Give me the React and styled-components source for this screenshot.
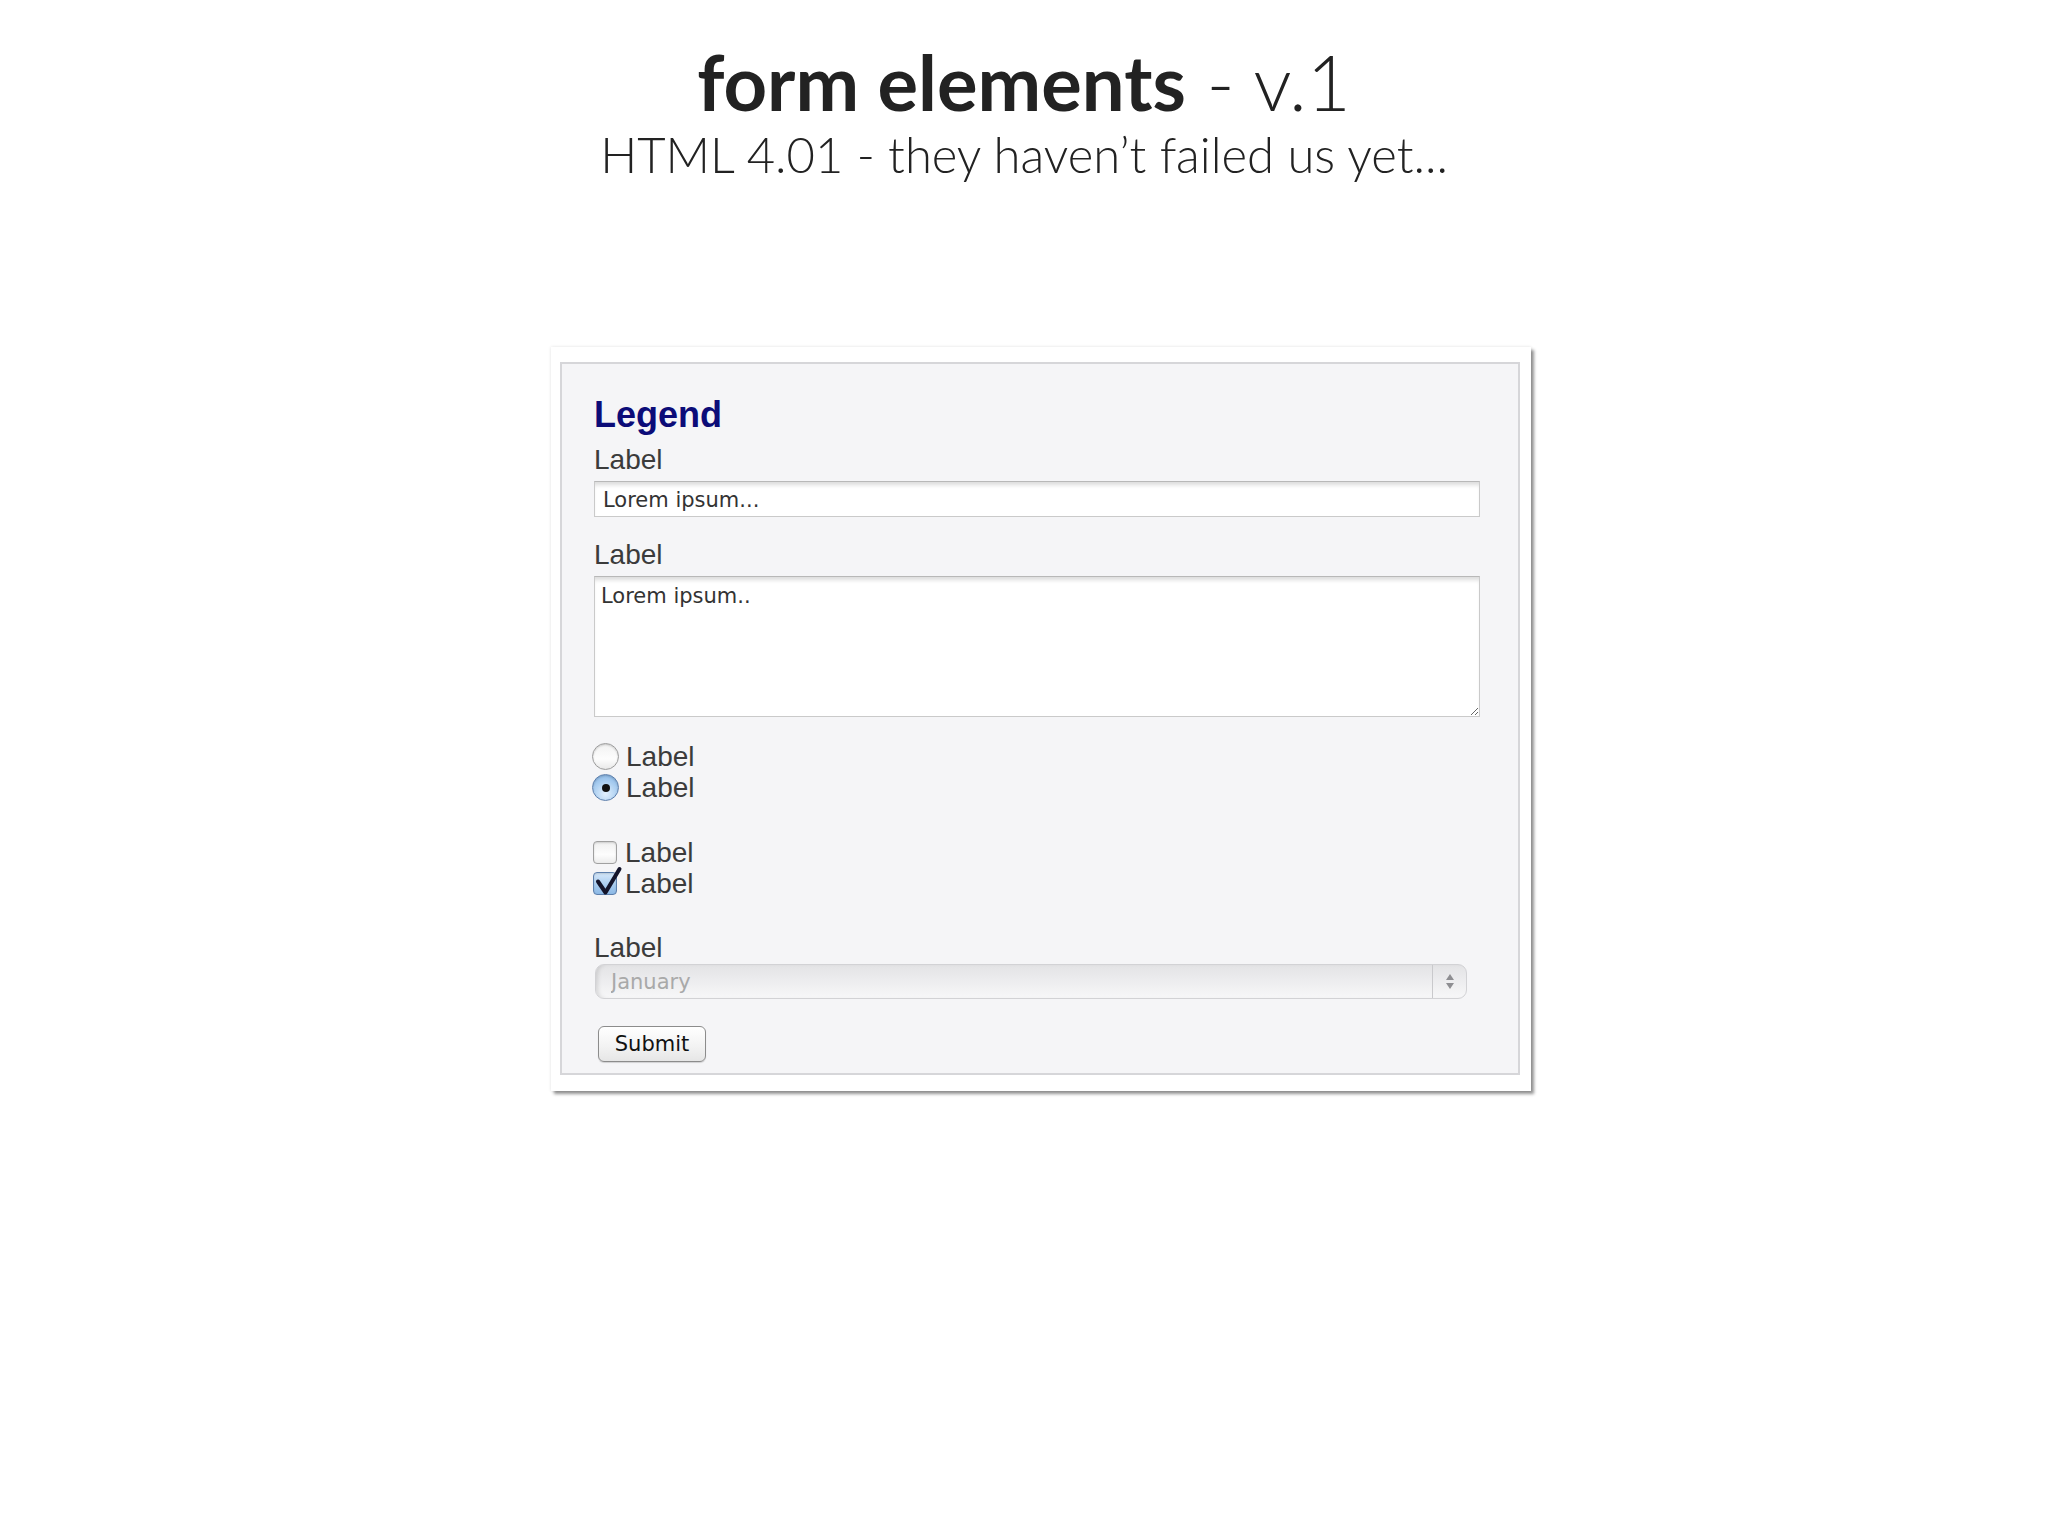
import React from "react";
import styled, { createGlobalStyle } from "styled-components";

const GlobalStyle = createGlobalStyle`
  body {
    margin: 0;
    background: #fff;
  }
`;

export default function App() {
  return (
    <Page>
      <GlobalStyle />
      <Header>
        <Title>
          form elements<Light> - v.1</Light>
        </Title>
        <Subtitle>HTML 4.01 - they haven’t failed us yet...</Subtitle>
      </Header>

      <Card>
        <Fieldset>
          <Legend>Legend</Legend>
          <Label>Label</Label>
          <TextInput readOnly value="Lorem ipsum..." />

          <Label $top={23}>Label</Label>
          <TextArea readOnly value="Lorem ipsum.." />

          <OptionGroup $top={24}>
            <OptionRow>
              <Radio />
              Label
            </OptionRow>
            <OptionRow>
              <Radio $checked />
              Label
            </OptionRow>
          </OptionGroup>

          <OptionGroup $top={34}>
            <OptionRow>
              <Checkbox />
              Label
            </OptionRow>
            <OptionRow>
              <Checkbox $checked>
                <CheckMark viewBox="0 0 24 23">
                  <path d="M4 8.5 L11.5 19.5 L25.5 -4" />
                </CheckMark>
              </Checkbox>
              Label
            </OptionRow>
          </OptionGroup>

          <Label $top={34}>Label</Label>
          <SelectWrap>
            <SelectField defaultValue="January" disabled>
              <option>January</option>
              <option>February</option>
            </SelectField>
            <ArrowCap>
              <ArrowUp />
              <ArrowDown />
            </ArrowCap>
          </SelectWrap>

          <SubmitButton>Submit</SubmitButton>
        </Fieldset>
      </Card>
    </Page>
  );
}

const Page = styled.div`
  width: 2048px;
  min-height: 1536px;
`;

const Header = styled.header`
  padding-top: 44px;
  text-align: center;
  color: #222;
  font-family: Lato, "Open Sans", sans-serif;
`;

const Title = styled.h1`
  margin: 0;
  font-size: 76px;
  line-height: 76px;
  font-weight: 700;
`;

const Light = styled.span`
  font-weight: 300;
`;

const Subtitle = styled.p`
  margin: 10px 0 0;
  font-size: 49px;
  line-height: 49px;
  font-weight: 300;
`;

const Card = styled.div`
  margin: 168px 0 0 551px;
  width: 980px;
  height: 744px;
  box-sizing: border-box;
  padding: 15px 11px 16px 9px;
  display: flex;
  background: #fff;
  box-shadow: 3px 3px 3px rgba(0, 0, 0, 0.42), 0 0 3px rgba(0, 0, 0, 0.12);
`;

const Fieldset = styled.div`
  flex: 1;
  display: flex;
  flex-direction: column;
  align-items: flex-start;
  padding: 31px 0 0 32px;
  border: 2px solid #d6d6d9;
  background: #f5f5f7;
  font-family: "Liberation Sans", Arial, sans-serif;
`;

const Legend = styled.div`
  font-size: 36px;
  line-height: 40px;
  font-weight: 700;
  color: #0c0c78;
  margin-bottom: 10px;
`;

const Label = styled.label`
  display: block;
  margin-top: ${(p) => p.$top || 0}px;
  font-size: 28px;
  line-height: 30px;
  color: #3b3b3b;
`;

const fieldFont = `
  font-family: "DejaVu Sans", Verdana, sans-serif;
  font-size: 21px;
  color: #333;
`;

const TextInput = styled.input`
  margin-top: 6px;
  width: 886px;
  height: 36px;
  box-sizing: border-box;
  padding: 2px 0 0 8px;
  border: 1px solid #cacaca;
  border-top-color: #b8b8b8;
  background: #fff;
  box-shadow: inset 0 5px 4px -2px rgba(0, 0, 0, 0.14);
  outline: none;
  ${fieldFont}
`;

const TextArea = styled.textarea`
  margin-top: 6px;
  width: 886px;
  height: 141px;
  box-sizing: border-box;
  padding: 7px 6px;
  border: 1px solid #cacaca;
  border-top-color: #b8b8b8;
  background: #fff;
  box-shadow: inset 0 5px 4px -2px rgba(0, 0, 0, 0.14);
  outline: none;
  resize: both;
  line-height: 24px;
  ${fieldFont}
`;

const OptionGroup = styled.div`
  margin-top: ${(p) => p.$top}px;
  margin-left: -2px;
  display: flex;
  flex-direction: column;
`;

const OptionRow = styled.label`
  display: flex;
  align-items: center;
  gap: 7px;
  height: 31px;
  font-size: 28px;
  line-height: 31px;
  color: #3b3b3b;
`;

const Radio = styled.span`
  width: 27px;
  height: 27px;
  box-sizing: border-box;
  border-radius: 50%;
  display: flex;
  align-items: center;
  justify-content: center;
  border: 1px solid ${(p) => (p.$checked ? "#5d7fac" : "#9c9c9c")};
  background: ${(p) =>
    p.$checked
      ? "radial-gradient(circle at 50% 75%, #e2f0fd 0%, #a9cdf0 55%, #7fb0e2 100%)"
      : "linear-gradient(#f2f2f2, #fdfdfd 60%, #e9e9e9)"};
  box-shadow: inset 0 1px 2px rgba(0, 0, 0, 0.18);

  &::after {
    content: "";
    display: ${(p) => (p.$checked ? "block" : "none")};
    width: 8px;
    height: 8px;
    border-radius: 50%;
    background: #111;
  }
`;

const Checkbox = styled.span`
  position: relative;
  width: 24px;
  height: 23px;
  margin: 0 1px 0 1px;
  box-sizing: border-box;
  border-radius: 4px;
  border: 1px solid ${(p) => (p.$checked ? "#5d7fac" : "#a0a0a0")};
  background: ${(p) =>
    p.$checked
      ? "linear-gradient(#d6e8fa, #a6caee 60%, #8cb9e6)"
      : "linear-gradient(#f0f0f0, #fdfdfd 60%, #ececec)"};
  box-shadow: inset 0 1px 2px rgba(0, 0, 0, 0.15);
`;

const CheckMark = styled.svg`
  position: absolute;
  left: 0;
  top: 0;
  width: 24px;
  height: 23px;
  overflow: visible;

  path {
    fill: none;
    stroke: #14142a;
    stroke-width: 4;
    stroke-linecap: round;
    stroke-linejoin: round;
  }
`;

const SelectWrap = styled.div`
  margin-top: 1px;
  margin-left: 1px;
  width: 872px;
  height: 35px;
  box-sizing: border-box;
  display: flex;
  border: 1px solid #d2d2d5;
  border-radius: 9px;
  overflow: hidden;
  background: linear-gradient(#e3e3e5, #eeeef0 55%, #f7f7f8);
  box-shadow: inset 4px 0 4px -2px rgba(0, 0, 0, 0.12);
`;

const SelectField = styled.select`
  flex: 1;
  appearance: none;
  border: 0;
  background: transparent;
  padding: 0 0 0 15px;
  outline: none;
  opacity: 1;
  ${fieldFont}
  color: #a9a9a9;
`;

const ArrowCap = styled.div`
  width: 33px;
  display: flex;
  flex-direction: column;
  align-items: center;
  justify-content: center;
  gap: 3px;
  border-left: 1px solid #c9c9cc;
`;

const ArrowUp = styled.span`
  width: 0;
  height: 0;
  border-left: 4px solid transparent;
  border-right: 4px solid transparent;
  border-bottom: 6px solid #8e8e92;
`;

const ArrowDown = styled.span`
  width: 0;
  height: 0;
  border-left: 4px solid transparent;
  border-right: 4px solid transparent;
  border-top: 6px solid #8e8e92;
`;

const SubmitButton = styled.button`
  margin: 27px 0 0 4px;
  width: 108px;
  height: 36px;
  padding: 0;
  border: 1px solid #8c8c8c;
  border-radius: 6px;
  background: linear-gradient(#ffffff, #f3f3f3 55%, #e6e6e6);
  box-shadow: 0 1px 1px rgba(0, 0, 0, 0.15);
  ${fieldFont}
  color: #111;
`;
